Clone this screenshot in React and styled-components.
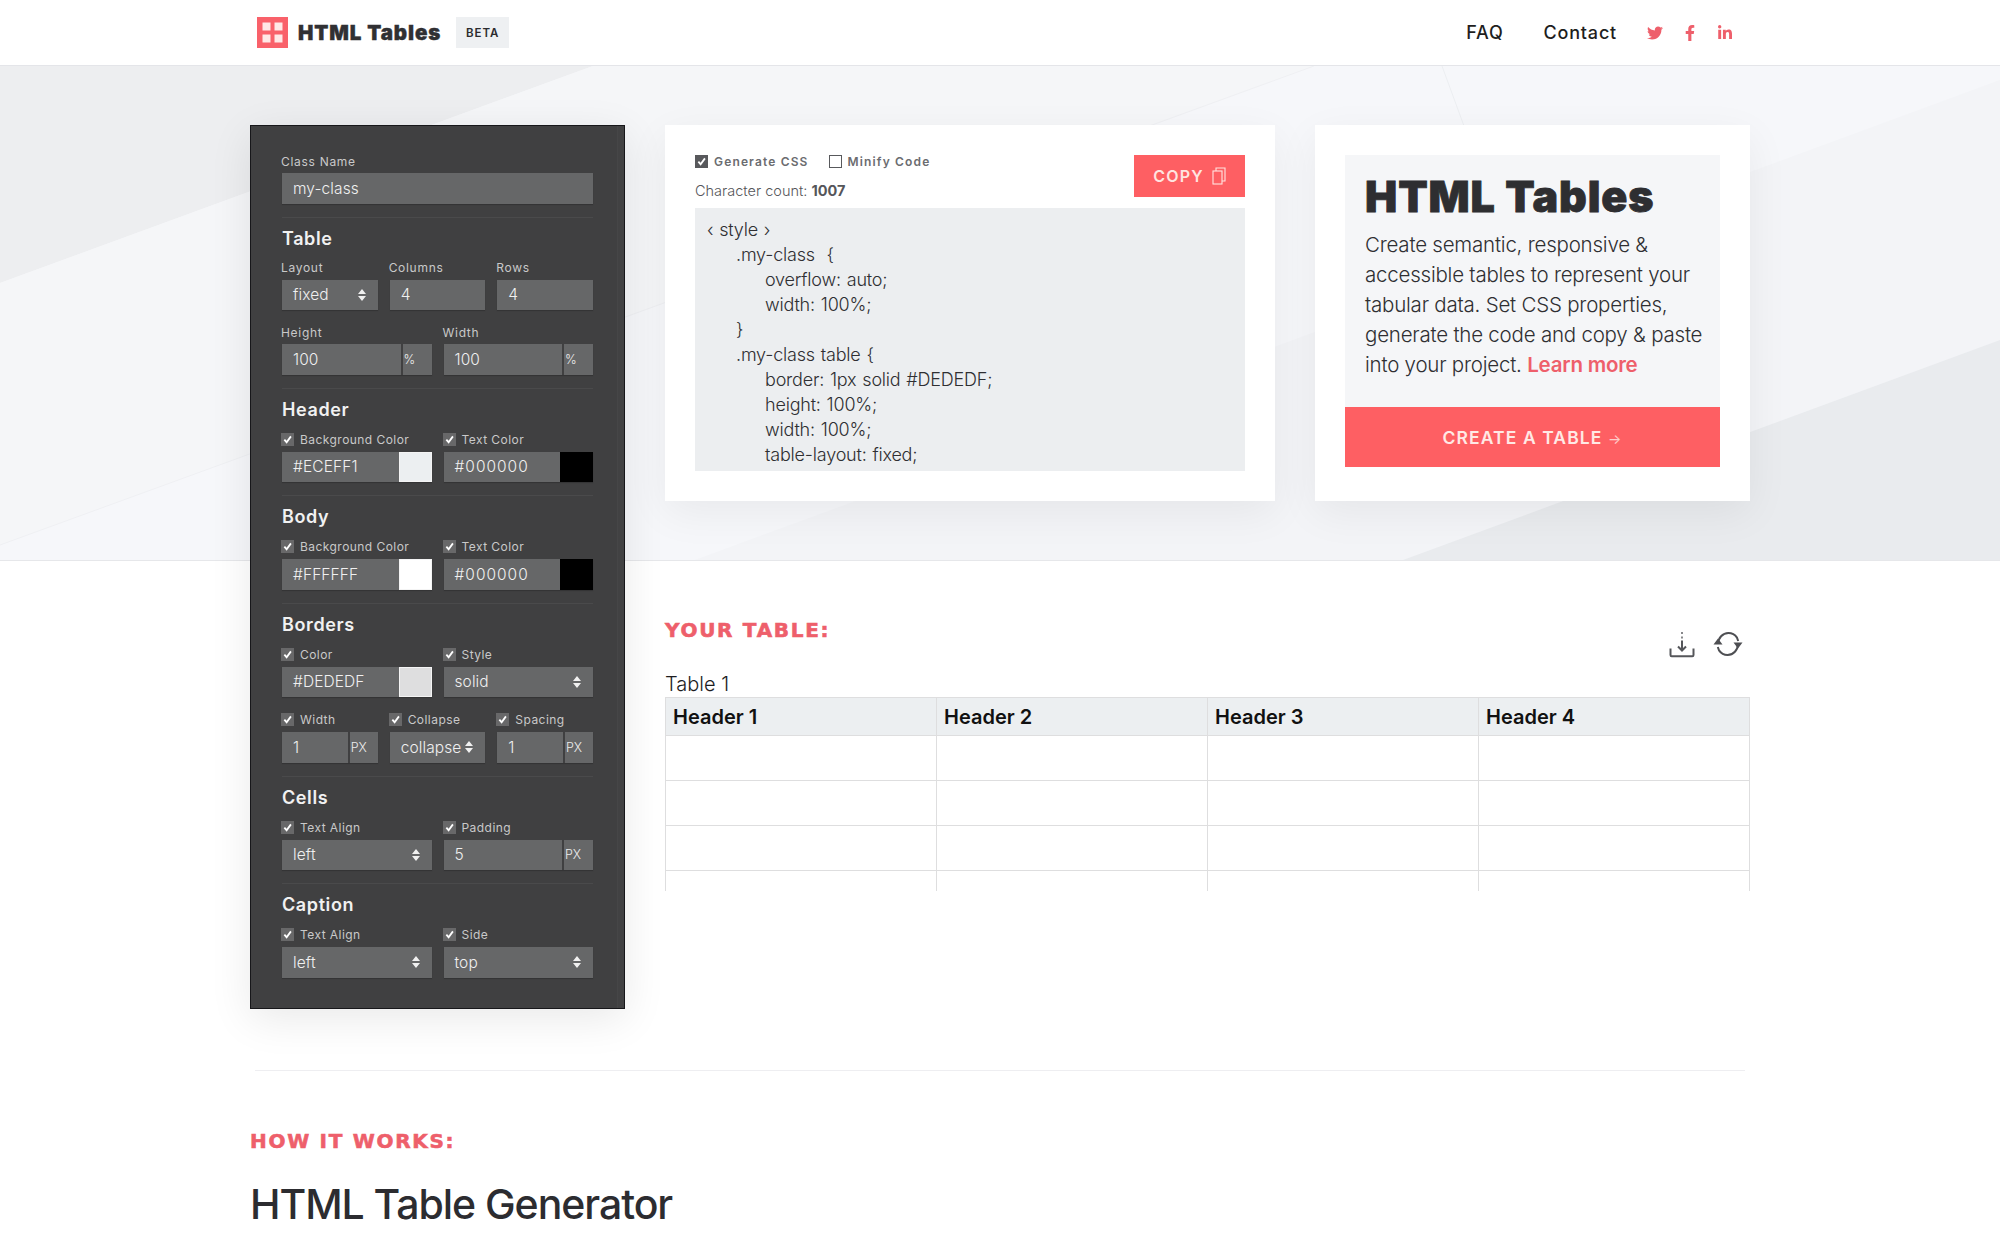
import React from "react";
import styled, { createGlobalStyle } from "styled-components";
import { FaTwitter, FaFacebookF, FaLinkedinIn } from "react-icons/fa";

const GlobalStyle = createGlobalStyle`
  html, body {
    margin: 0;
    padding: 0;
    background: #fff;
    font-family: Inter, "Liberation Sans", sans-serif;
    color: #2f2f32;
  }
  * { box-sizing: border-box; }
`;

const Page = styled.div`
  height: 1250px;
  overflow: hidden;
  background: #fff;
`;

const TopBar = styled.header`
  height: 66px;
  background: #fff;
  border-bottom: 1px solid #e4e5e9;
`;

const TopInner = styled.div`
  width: 1500px;
  height: 65px;
  margin: 0 auto;
  padding: 0 8px 0 7px;
  display: flex;
  align-items: center;
`;

const LogoText = styled.span`
  margin-left: 10px;
  font-size: 20.5px;
  font-weight: 900;
  letter-spacing: 0.9px;
  color: #303033;
  -webkit-text-stroke: 0.4px #303033;
`;

const Beta = styled.span`
  margin-left: 15px;
  width: 53px;
  height: 31px;
  display: flex;
  align-items: center;
  justify-content: center;
  background: #eef0f2;
  font-size: 11.5px;
  font-weight: 600;
  letter-spacing: 1px;
  color: #2b2b2e;
`;

const Nav = styled.nav`
  margin-left: auto;
  display: flex;
  align-items: center;
`;

const NavLink = styled.a`
  margin-right: ${(p) => p.$gap}px;
  font-size: 18px;
  font-weight: 500;
  letter-spacing: 0.8px;
  color: #1e1e20;
`;

const Social = styled.a`
  width: 35px;
  display: flex;
  justify-content: center;
  color: #ee5f6b;
  font-size: 16px;
`;

const Stage = styled.main`
  position: relative;
`;

const HeroBand = styled.div`
  position: absolute;
  inset: 0 0 auto 0;
  height: 495px;
  background: #f5f6f9;
  border-bottom: 1px solid #e6e7ea;
  overflow: hidden;
  svg { display: block; }
`;

const Columns = styled.div`
  position: relative;
  width: 1500px;
  margin: 0 auto;
  padding-top: 59px;
  display: grid;
  grid-template-columns: 375px 1085px;
  column-gap: 40px;
  align-items: start;
`;

const Panel = styled.aside`
  position: relative;
  height: 884px;
  padding: 27px 31px 0;
  background: #404041;
  border: 1px solid #17171a;
  box-shadow: 0 10px 40px rgba(0, 0, 0, 0.09);
  &::after {
    content: "";
    position: absolute;
    top: 0;
    bottom: 0;
    right: 0;
    width: 6px;
    border-left: 1px solid #464647;
    background: #424243;
  }
`;

const Section = styled.section`
  padding: ${(p) => (p.$first ? "0 0 13px" : "10px 0 13px")};
  border-top: ${(p) => (p.$first ? "none" : "1px solid #4a4a4b")};
`;

const SectionTitle = styled.h3`
  margin: 0 0 10px;
  height: 22px;
  line-height: 22px;
  font-size: 18px;
  font-weight: 600;
  letter-spacing: 0.6px;
  color: #f1f1f1;
`;

const Row = styled.div`
  display: grid;
  grid-template-columns: repeat(${(p) => p.$cols || 2}, 1fr);
  column-gap: 12px;
  & + & { margin-top: 14px; }
`;

const Label = styled.label`
  display: flex;
  align-items: center;
  height: 16px;
  margin: 0 0 4px -1px;
  font-size: 12px;
  font-weight: 400;
  letter-spacing: 0.7px;
  white-space: nowrap;
  color: #c9c9c9;
`;

const CheckLabel = styled(Label)`
  height: 17px;
  gap: 6px;
  letter-spacing: 0.45px;
`;

const Tick = styled.span`
  width: 13px;
  height: 13px;
  flex: none;
  display: flex;
  align-items: center;
  justify-content: center;
  background: #686869;
`;

const Field = styled.div`
  position: relative;
  height: 30.5px;
  display: flex;
  align-items: stretch;
  font-size: 15.5px;
  font-weight: 300;
  letter-spacing: ${(p) => (p.$wide ? "1px" : "0.1px")};
  color: #f0f0f0;
  box-shadow: 0 1px 1px rgba(0, 0, 0, 0.18);
`;

const Value = styled.div`
  flex: 1;
  min-width: 0;
  display: flex;
  align-items: center;
  padding-left: 11px;
  background: #666768;
  white-space: nowrap;
`;

const Suffix = styled.span`
  width: ${(p) => p.$w || 29}px;
  margin-left: 2px;
  flex: none;
  display: flex;
  align-items: center;
  padding-left: 1px;
  background: #666768;
  font-size: 12.5px;
  letter-spacing: 0;
  color: #ececec;
`;

const Swatch = styled.span`
  width: 33px;
  flex: none;
  background: ${(p) => p.$color};
  border: 1px solid ${(p) => (p.$color === "#000000" ? "#000" : "#f4f4f4")};
`;

const Updown = styled.svg`
  position: absolute;
  top: 50%;
  right: 12px;
  width: 8px;
  height: 12px;
  margin-top: -6px;
  fill: #f0f0f0;
`;

const RightCol = styled.div`
  min-width: 0;
`;

const Cards = styled.div`
  display: flex;
  gap: 40px;
  height: 376px;
`;

const Card = styled.section`
  width: ${(p) => p.$w}px;
  padding: 30px;
  background: #fff;
  box-shadow: 0 12px 40px rgba(0, 0, 0, 0.06);
`;

const CodeHead = styled.div`
  height: 53px;
  display: flex;
  justify-content: space-between;
`;

const Options = styled.div`
  display: flex;
  flex-direction: column;
`;

const OptionRow = styled.div`
  display: flex;
  gap: 20px;
  height: 12px;
`;

const Option = styled.span`
  display: flex;
  align-items: center;
  gap: 6px;
  font-size: 12px;
  font-weight: 600;
  letter-spacing: 1.15px;
  color: #6b6c70;
`;

const SmallBox = styled.span`
  width: 13px;
  height: 13px;
  display: flex;
  align-items: center;
  justify-content: center;
  background: ${(p) => (p.$on ? "#58595c" : "#fff")};
  border: 1px solid #58595c;
`;

const Count = styled.div`
  margin-top: 15px;
  font-size: 14.5px;
  font-weight: 300;
  letter-spacing: 0;
  color: #55565a;
  b { font-weight: 700; }
`;

const CopyButton = styled.button`
  width: 111px;
  height: 42px;
  display: flex;
  align-items: center;
  justify-content: center;
  gap: 8px;
  border: none;
  background: #fe5f63;
  font-family: inherit;
  font-size: 16px;
  font-weight: 600;
  letter-spacing: 1.2px;
  color: #ffe4e0;
`;

const CodeBox = styled.pre`
  height: 263px;
  margin: 0;
  padding: 9px 12px;
  overflow: hidden;
  background: #eceef0;
  font-family: inherit;
  font-size: 18px;
  font-weight: 300;
  line-height: 25px;
  letter-spacing: -0.2px;
  color: #2f2f32;
`;

const CodeLine = styled.div`
  padding-left: ${(p) => p.$indent * 29}px;
  word-spacing: 1px;
`;

const Intro = styled.div`
  height: 252px;
  padding: 18px 0 0 20px;
  background: #f5f6f8;
`;

const IntroTitle = styled.h1`
  margin: 0;
  height: 46px;
  line-height: 46px;
  font-size: 43px;
  font-weight: 900;
  letter-spacing: 0.9px;
  color: #2e2e31;
  -webkit-text-stroke: 0.8px #2e2e31;
`;

const IntroText = styled.p`
  margin: 11px 0 0;
  font-size: 20.5px;
  font-weight: 300;
  line-height: 30px;
  letter-spacing: -0.22px;
  white-space: pre;
  color: #2f2f32;
  a {
    font-weight: 600;
    color: #ee5f6b;
  }
`;

const CreateButton = styled.button`
  width: 100%;
  height: 60px;
  border: none;
  background: #fe5f63;
  font-family: inherit;
  font-size: 17.5px;
  font-weight: 600;
  letter-spacing: 1.1px;
  color: #ffe9e5;
  span {
    font-size: 14px;
    font-weight: 400;
    opacity: 0.8;
  }
`;

const TableHead = styled.div`
  height: 52px;
  margin-top: 119px;
  display: flex;
  align-items: flex-start;
  justify-content: space-between;
  padding-right: 7px;
`;

const Eyebrow = styled.h2`
  margin: 0;
  font-family: "DejaVu Sans", Inter, sans-serif;
  font-size: 20px;
  font-weight: 700;
  line-height: 20px;
  letter-spacing: 1.7px;
  text-transform: uppercase;
  color: #ee5f6b;
  -webkit-text-stroke: 0.6px #ee5f6b;
`;

const Tools = styled.div`
  display: flex;
  gap: 18px;
  margin-top: 11px;
`;

const TableClip = styled.div`
  height: 219px;
  overflow: hidden;
`;

const Grid = styled.table`
  width: 100%;
  table-layout: fixed;
  border-collapse: collapse;
  caption {
    height: 25px;
    line-height: 25px;
    text-align: left;
    font-size: 20px;
    font-weight: 300;
    color: #1d1d1f;
  }
  th, td {
    border: 1px solid #dededf;
    padding: 0 7px;
    text-align: left;
  }
  th {
    height: 38px;
    background: #eceff1;
    font-size: 20px;
    font-weight: 600;
    color: #111;
  }
  td { height: 45px; }
`;

const Rule = styled.hr`
  width: 1490px;
  height: 1px;
  margin: 61px auto 0;
  border: none;
  background: #eeeef1;
`;

const HowItWorks = styled.section`
  position: relative;
  width: 1500px;
  margin: 60px auto 0;
`;

const BigTitle = styled.h2`
  margin: 28px 0 0;
  font-size: 41px;
  font-weight: 500;
  line-height: 50px;
  letter-spacing: -1.05px;
  color: #2c2c30;
`;

function Check() {
  return (
    <svg width="9" height="9" viewBox="0 0 10 10" fill="none" stroke="#fff" strokeWidth="2">
      <path d="M1.5 5.2 4 8l4.8-6.5" />
    </svg>
  );
}

function Arrows() {
  return (
    <Updown viewBox="0 0 8 12">
      <path d="M4 0 8 5H0zM4 12 0 7h8z" />
    </Updown>
  );
}

function CheckField({ children }) {
  return (
    <CheckLabel>
      <Tick>
        <Check />
      </Tick>
      {children}
    </CheckLabel>
  );
}

function Select({ value }) {
  return (
    <Field>
      <Value>{value}</Value>
      <Arrows />
    </Field>
  );
}

function Unit({ value, unit, w }) {
  return (
    <Field>
      <Value>{value}</Value>
      <Suffix $w={w}>{unit}</Suffix>
    </Field>
  );
}

function Colour({ value, color }) {
  return (
    <Field $wide={color === "#000000"}>
      <Value>{value}</Value>
      <Swatch $color={color} />
    </Field>
  );
}

function Logo() {
  return (
    <svg width="31" height="31" viewBox="0 0 31 31">
      <rect width="31" height="31" fill="#f9616a" />
      <rect x="5.5" y="5.5" width="8" height="8" fill="#ffe8e6" />
      <rect x="17.5" y="5.5" width="8" height="8" fill="#ffe8e6" />
      <rect x="5.5" y="17.5" width="8" height="8" fill="#ffe8e6" />
      <rect x="17.5" y="17.5" width="8" height="8" fill="#ffe8e6" />
    </svg>
  );
}

function HeroPattern() {
  return (
    <svg width="2000" height="494" viewBox="0 0 2000 494">
      <polygon points="0,0 593,0 0,217" fill="#edeef0" />
      <polygon points="593,0 1314,0 0,479 0,217" fill="#f5f6f8" />
      <polygon points="1314,0 2000,0 2000,14 695,494 0,494 0,479" fill="#f6f7fa" />
      <polygon points="2000,14 2000,274 1403,494 695,494" fill="#f3f4f7" />
      <polygon points="2000,274 2000,494 1403,494" fill="#e9ebee" />
      <path d="M0 479 1314 0" stroke="#eff0f3" strokeWidth="1" />
      <path d="M1442 0 1475 90" stroke="#eceef1" strokeWidth="1" />
    </svg>
  );
}

function CopyIcon() {
  return (
    <svg width="14" height="18" viewBox="0 0 14 18" fill="none" stroke="#ffe4e0" strokeWidth="1.1">
      <rect x="1" y="4" width="9" height="13" />
      <path d="M4 4V1h9v13h-3" />
    </svg>
  );
}

function DownloadIcon() {
  return (
    <svg width="26" height="28" viewBox="0 0 26 28" fill="none" stroke="#55565a" strokeWidth="2">
      <path d="M13 1v2M13 5.500v2" strokeWidth="1.400" />
      <path d="M13 9.500V19M9 15.500l4 4 4-4" />
      <path d="M1.500 17.500v6.500c0 .8.5 1.200 1.200 1.200h20.600c.7 0 1.200-.4 1.200-1.200v-6.500" />
    </svg>
  );
}

function RefreshIcon() {
  return (
    <svg width="30" height="26" viewBox="0 0 30 26" fill="none" stroke="#4e4f53" strokeWidth="2">
      <path d="M5 13c.2-6 4.600-11 10.400-11 3.600 0 6.600 1.700 8.600 4.600l1.200 3.400" />
      <path d="M25 13c-.2 6-4.600 11-10.400 11-3.600 0-6.600-1.700-8.600-4.600L4.800 16" />
      <path d="M0.500 13.500 5 7.500l4.500 6z" fill="#4e4f53" stroke="none" />
      <path d="M20.500 11.500h9L25 17.500z" fill="#4e4f53" stroke="none" />
    </svg>
  );
}

const codeLines = [
  [0, "‹ style ›"],
  [1, ".my-class  {"],
  [2, "overflow: auto;"],
  [2, "width: 100%;"],
  [1, "}"],
  [1, ".my-class table {"],
  [2, "border: 1px solid #DEDEDF;"],
  [2, "height: 100%;"],
  [2, "width: 100%;"],
  [2, "table-layout: fixed;"],
];

export default function App() {
  return (
    <Page>
      <GlobalStyle />
      <TopBar>
        <TopInner>
          <Logo />
          <LogoText>HTML Tables</LogoText>
          <Beta>BETA</Beta>
          <Nav>
            <NavLink $gap={40}>FAQ</NavLink>
            <NavLink $gap={20}>Contact</NavLink>
            <Social><FaTwitter /></Social>
            <Social><FaFacebookF /></Social>
            <Social><FaLinkedinIn /></Social>
          </Nav>
        </TopInner>
      </TopBar>

      <Stage>
        <HeroBand>
          <HeroPattern />
        </HeroBand>
        <Columns>
          <Panel>
            <Section $first>
              <Label>Class Name</Label>
              <Field><Value>my-class</Value></Field>
            </Section>

            <Section>
              <SectionTitle>Table</SectionTitle>
              <Row $cols={3}>
                <div><Label>Layout</Label><Select value="fixed" /></div>
                <div><Label>Columns</Label><Field><Value>4</Value></Field></div>
                <div><Label>Rows</Label><Field><Value>4</Value></Field></div>
              </Row>
              <Row>
                <div><Label>Height</Label><Unit value="100" unit="%" /></div>
                <div><Label>Width</Label><Unit value="100" unit="%" /></div>
              </Row>
            </Section>

            <Section>
              <SectionTitle>Header</SectionTitle>
              <Row>
                <div><CheckField>Background Color</CheckField><Colour value="#ECEFF1" color="#eceff1" /></div>
                <div><CheckField>Text Color</CheckField><Colour value="#000000" color="#000000" /></div>
              </Row>
            </Section>

            <Section>
              <SectionTitle>Body</SectionTitle>
              <Row>
                <div><CheckField>Background Color</CheckField><Colour value="#FFFFFF" color="#ffffff" /></div>
                <div><CheckField>Text Color</CheckField><Colour value="#000000" color="#000000" /></div>
              </Row>
            </Section>

            <Section>
              <SectionTitle>Borders</SectionTitle>
              <Row>
                <div><CheckField>Color</CheckField><Colour value="#DEDEDF" color="#dededf" /></div>
                <div><CheckField>Style</CheckField><Select value="solid" /></div>
              </Row>
              <Row $cols={3}>
                <div><CheckField>Width</CheckField><Unit value="1" unit="PX" w={28} /></div>
                <div><CheckField>Collapse</CheckField><Select value="collapse" /></div>
                <div><CheckField>Spacing</CheckField><Unit value="1" unit="PX" w={28} /></div>
              </Row>
            </Section>

            <Section>
              <SectionTitle>Cells</SectionTitle>
              <Row>
                <div><CheckField>Text Align</CheckField><Select value="left" /></div>
                <div><CheckField>Padding</CheckField><Unit value="5" unit="PX" /></div>
              </Row>
            </Section>

            <Section>
              <SectionTitle>Caption</SectionTitle>
              <Row>
                <div><CheckField>Text Align</CheckField><Select value="left" /></div>
                <div><CheckField>Side</CheckField><Select value="top" /></div>
              </Row>
            </Section>
          </Panel>

          <RightCol>
            <Cards>
              <Card $w={610}>
                <CodeHead>
                  <Options>
                    <OptionRow>
                      <Option><SmallBox $on><Check /></SmallBox>Generate CSS</Option>
                      <Option><SmallBox />Minify Code</Option>
                    </OptionRow>
                    <Count>Character count: <b>1007</b></Count>
                  </Options>
                  <CopyButton>COPY <CopyIcon /></CopyButton>
                </CodeHead>
                <CodeBox>
                  {codeLines.map(([indent, text]) => (
                    <CodeLine key={text} $indent={indent}>{text}</CodeLine>
                  ))}
                </CodeBox>
              </Card>

              <Card $w={435}>
                <Intro>
                  <IntroTitle>HTML Tables</IntroTitle>
                  <IntroText>
                    {"Create semantic, responsive &\naccessible tables to represent your\ntabular data. Set CSS properties,\ngenerate the code and copy & paste\ninto your project. "}
                    <a>Learn more</a>
                  </IntroText>
                </Intro>
                <CreateButton>CREATE A TABLE <span>→</span></CreateButton>
              </Card>
            </Cards>

            <TableHead>
              <Eyebrow>Your table:</Eyebrow>
              <Tools>
                <DownloadIcon />
                <RefreshIcon />
              </Tools>
            </TableHead>
            <TableClip>
              <Grid>
                <caption>Table 1</caption>
                <thead>
                  <tr>
                    <th>Header 1</th>
                    <th>Header 2</th>
                    <th>Header 3</th>
                    <th>Header 4</th>
                  </tr>
                </thead>
                <tbody>
                  {[0, 1, 2, 3].map((r) => (
                    <tr key={r}>
                      <td /><td /><td /><td />
                    </tr>
                  ))}
                </tbody>
              </Grid>
            </TableClip>
          </RightCol>
        </Columns>

        <Rule />
        <HowItWorks>
          <Eyebrow>How it works:</Eyebrow>
          <BigTitle>HTML Table Generator</BigTitle>
        </HowItWorks>
      </Stage>
    </Page>
  );
}
